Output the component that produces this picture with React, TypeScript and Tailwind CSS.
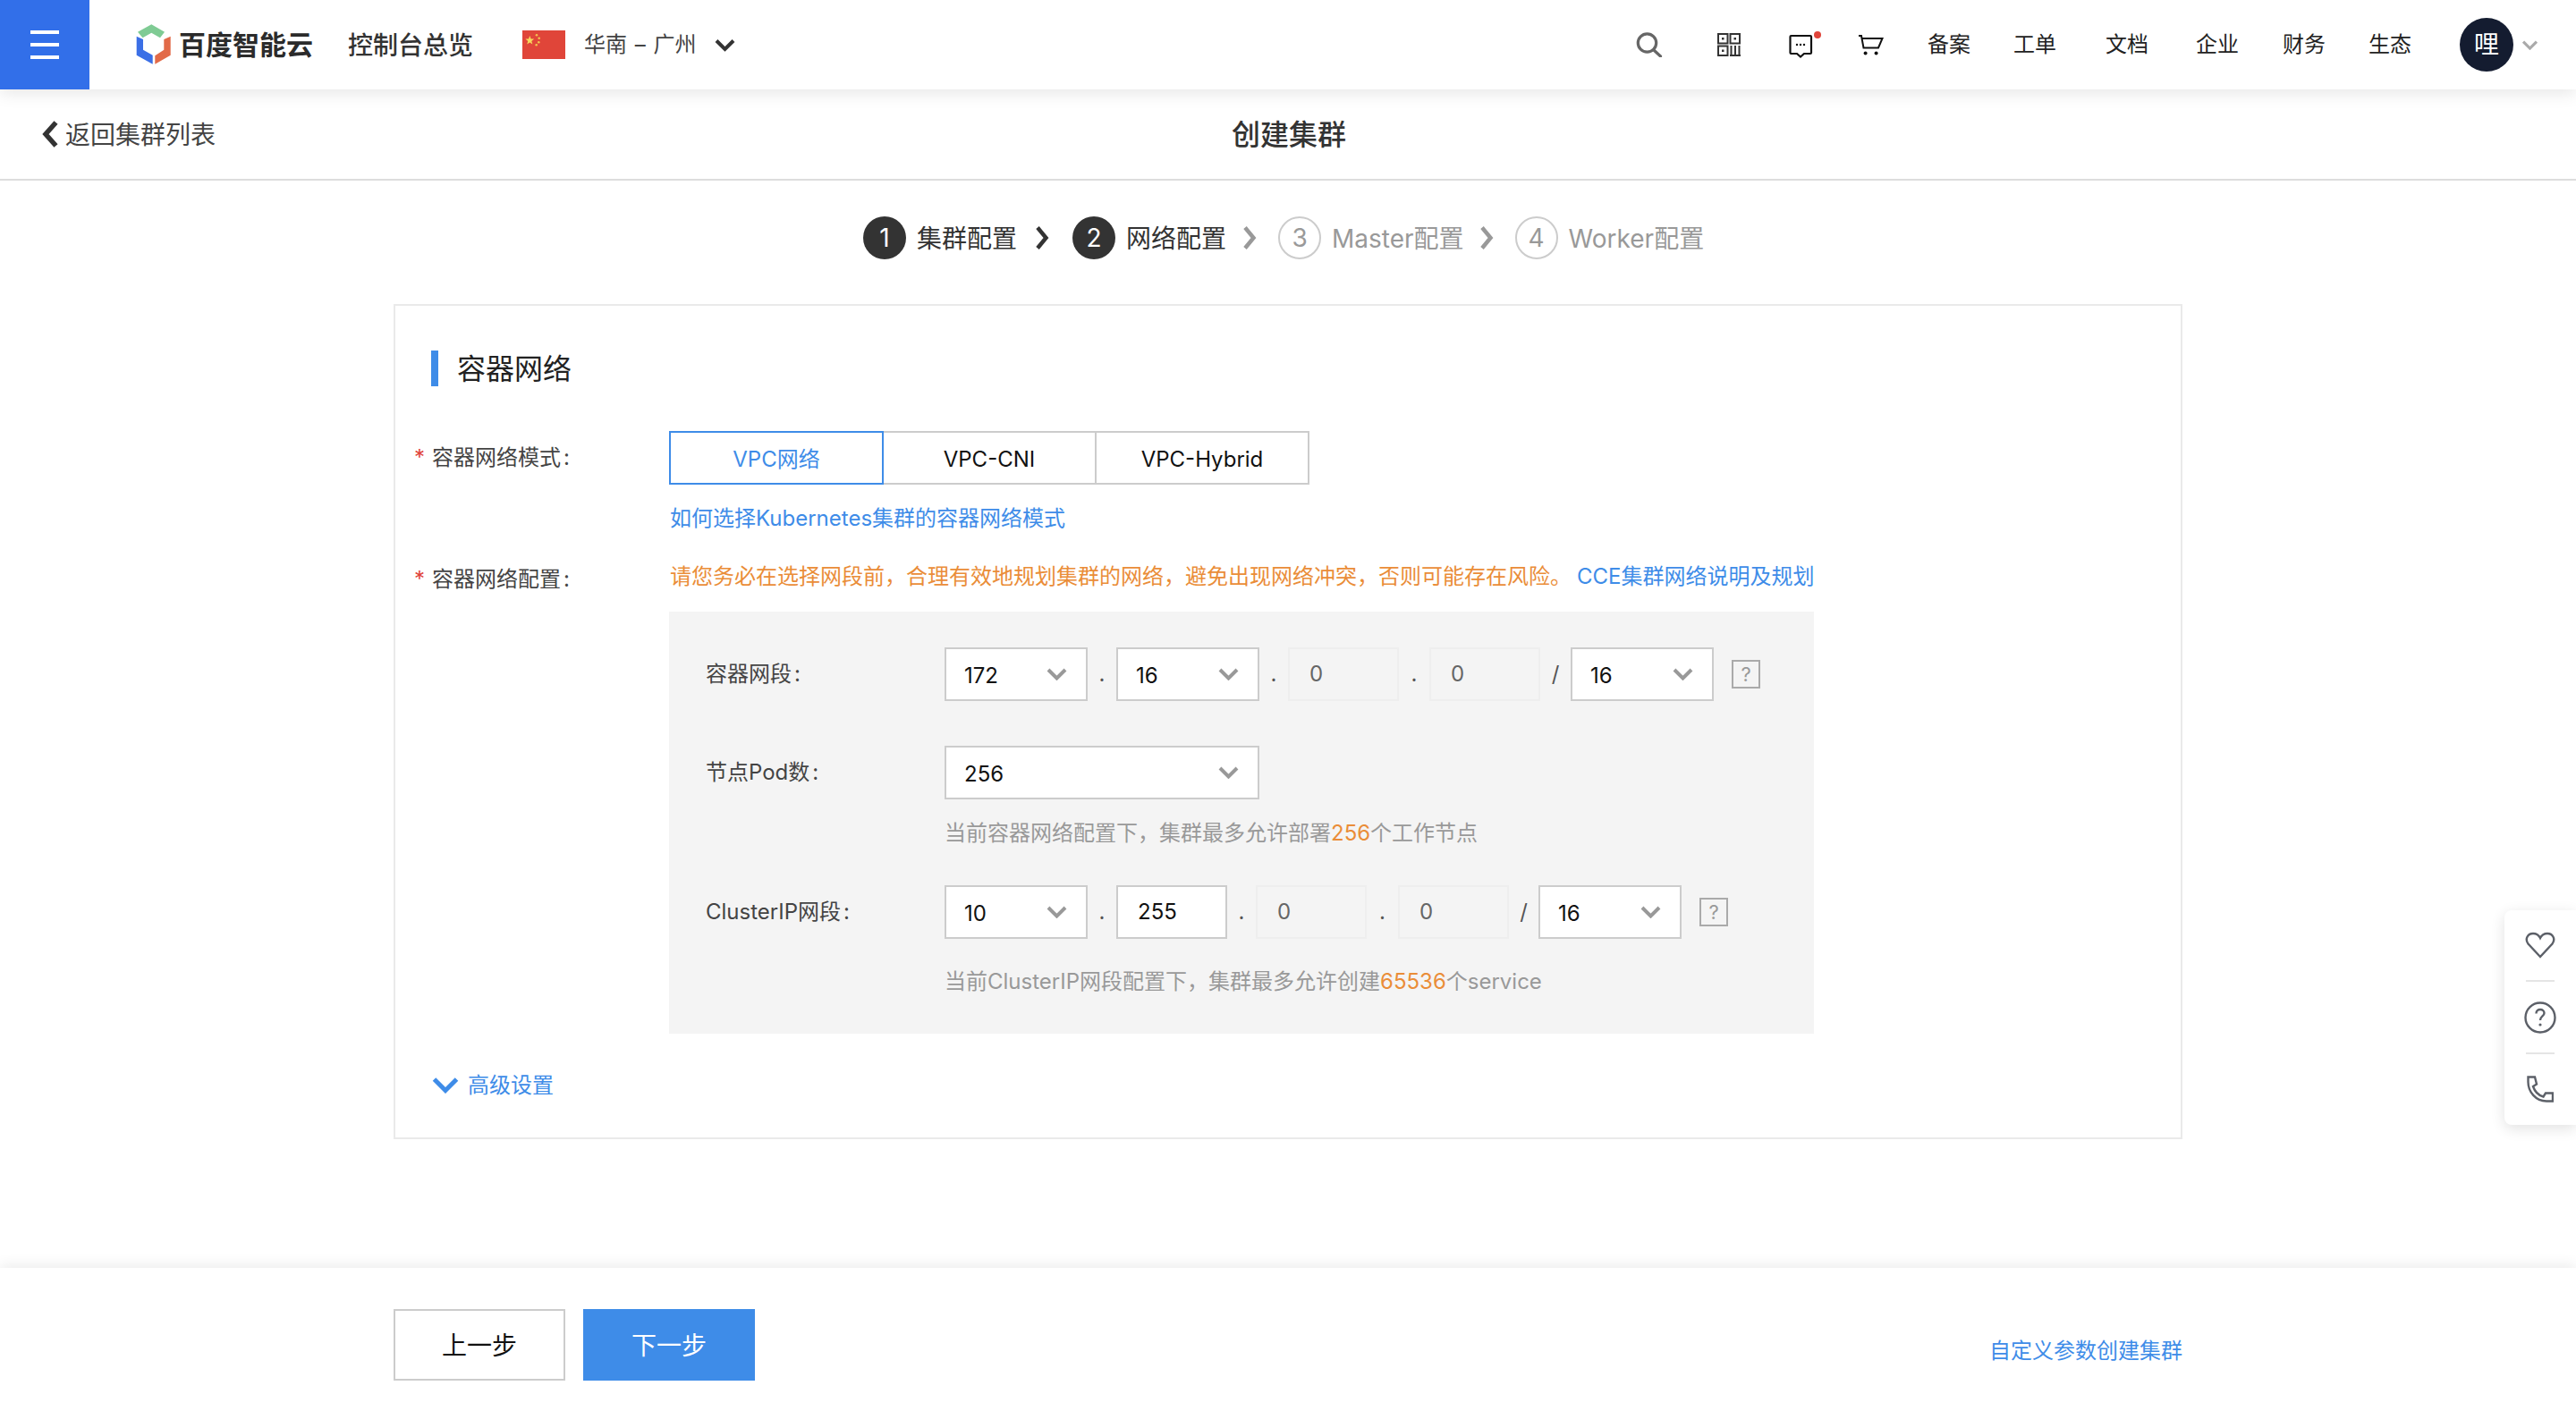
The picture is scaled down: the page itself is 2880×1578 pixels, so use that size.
import type { ReactNode } from "react";

function Chevron({ className = "", color = "#999999" }: { className?: string; color?: string }) {
  return (
    <svg viewBox="0 0 23 14" className={className} fill="none">
      <path d="M2 2 L11.5 11.5 L21 2" stroke={color} strokeWidth="4" />
    </svg>
  );
}

function StepArrow({ color }: { color: string }) {
  return (
    <svg viewBox="0 0 16 26" className="h-[26px] w-[16px]" fill="none">
      <path d="M3 1.5 L12.5 13 L3 24.5" stroke={color} strokeWidth="4.5" />
    </svg>
  );
}

function Step({ num, label, active }: { num: string; label: string; active: boolean }) {
  return (
    <div className="flex items-center">
      <span
        className={
          active
            ? "flex h-[48px] w-[48px] items-center justify-center rounded-full bg-[#333333] text-[28px] text-white"
            : "flex h-[48px] w-[48px] items-center justify-center rounded-full border-2 border-[#cccccc] text-[28px] text-[#999999]"
        }
      >
        {num}
      </span>
      <span className={active ? "ml-[12px] pt-[2px] text-[28px] text-[#333333]" : "ml-[12px] pt-[2px] text-[28px] text-[#999999]"}>
        {label}
      </span>
    </div>
  );
}

function Select({ value, className }: { value: string; className: string }) {
  return (
    <div className={`flex h-[60px] items-center justify-between border-2 border-[#cccccc] bg-white pl-[20px] pr-[21px] ${className}`}>
      <span className="pt-[3px] text-[24px] text-[#111111]">{value}</span>
      <Chevron className="h-[14px] w-[23px]" />
    </div>
  );
}

function Octet({ value, disabled }: { value: string; disabled?: boolean }) {
  return (
    <div
      className={
        disabled
          ? "flex h-[60px] w-[124px] items-center border-2 border-[#eeeeee] bg-[#f4f4f4] pl-[22px] text-[24px] text-[#666666]"
          : "flex h-[60px] w-[124px] items-center border-2 border-[#cccccc] bg-white pl-[22px] text-[24px] text-[#111111]"
      }
    >
      {value}
    </div>
  );
}

function Sep({ char, className }: { char: string; className: string }) {
  return <span className={`text-center text-[24px] text-[#555555] ${className}`}>{char}</span>;
}

function HelpBox() {
  return (
    <span className="ml-[20px] flex h-[32px] w-[32px] items-center justify-center border-2 border-[#aaaaaa] text-[22px] text-[#999999]">
      ?
    </span>
  );
}

function FieldLabel({ children }: { children: ReactNode }) {
  return (
    <div className="w-[267px] shrink-0 text-[24px] text-[#444444]">
      {children}
      <span className="ml-[3px]">:</span>
    </div>
  );
}

function RequiredLabel({ text, className }: { text: string; className: string }) {
  return (
    <div className={`flex w-[306px] shrink-0 items-center pl-[21px] text-[24px] text-[#444444] ${className}`}>
      <span className="w-[20px] text-[#e0443a]">*</span>
      <span>
        {text}
        <span className="ml-[3px]">:</span>
      </span>
    </div>
  );
}

function TopBar() {
  return (
    <header className="relative z-10 flex h-[100px] shrink-0 items-center bg-white shadow-[0_4px_18px_rgba(0,0,0,0.1)]">
      <div className="flex h-[100px] w-[100px] flex-col items-center justify-center gap-[10px] bg-[#326fe9]">
        <span className="h-[4px] w-[32px] bg-white" />
        <span className="h-[4px] w-[32px] bg-white" />
        <span className="h-[4px] w-[32px] bg-white" />
      </div>

      <svg viewBox="12 8 40 46" className="ml-[52px] h-[46px] w-[40px]">
        <path d="M29.3 8.3 L44 16.7 L39 23.3 L29.3 17.7 L19.5 23.3 L14 16.7 Z" fill="#7fcb94" />
        <path d="M12.7 21.7 L20 25 V36.7 L30.7 42.7 V52.7 L12.7 42.7 Z" fill="#3b6fe6" />
        <path d="M50.7 21.7 L43.3 25 V36.7 L33.3 43.3 V52.7 L50.7 42.7 Z" fill="#e26a48" />
      </svg>
      <span className="ml-[8px] text-[30px] font-bold text-[#2b2b2b]">百度智能云</span>
      <span className="ml-[39px] pt-[2px] text-[28px] font-medium text-[#333333]">控制台总览</span>

      <svg viewBox="0 0 48 32" className="ml-[55px] h-[32px] w-[48px]">
        <rect width="48" height="32" fill="#e04539" />
        <path d="M8.3 6 L9.6 9.6 L13.2 9.6 L10.3 11.9 L11.4 15.6 L8.3 13.4 L5.2 15.6 L6.3 11.9 L3.4 9.6 L7 9.6 Z" fill="#f7d95c" />
        <circle cx="16" cy="5.3" r="1.3" fill="#f3c24f" />
        <circle cx="18.7" cy="8.7" r="1.3" fill="#f3c24f" />
        <circle cx="18.3" cy="13.3" r="1.3" fill="#f3c24f" />
        <circle cx="15.7" cy="16.3" r="1.3" fill="#f3c24f" />
      </svg>
      <span className="ml-[21px] w-[125px] whitespace-nowrap text-[24px] text-[#444444] [word-spacing:2px]">华南 – 广州</span>
      <Chevron className="ml-[21px] h-[15px] w-[23px]" color="#333333" />

      <div className="ml-auto flex items-center pr-[43px]">
        <svg viewBox="0 0 30 28" className="h-[28px] w-[30px]" fill="none" stroke="#666666" strokeWidth="3.2">
          <circle cx="12.5" cy="12" r="10.2" />
          <path d="M20 20 L27.5 27" strokeLinecap="round" />
        </svg>

        <svg viewBox="0 0 26 26" className="ml-[61px] h-[26px] w-[26px]" fill="none" stroke="#333333" strokeWidth="2">
          <rect x="1" y="1" width="10.5" height="10.5" />
          <rect x="14.5" y="1" width="10.5" height="10.5" />
          <rect x="1" y="14.5" width="10.5" height="10.5" />
          <rect x="5" y="5" width="2.5" height="2.5" fill="#333333" stroke="none" />
          <rect x="18.5" y="5" width="2.5" height="2.5" fill="#333333" stroke="none" />
          <rect x="5" y="18.5" width="2.5" height="2.5" fill="#333333" stroke="none" />
          <path d="M14 25 H26 M15.5 14 V24 M20 14 V24 M24.5 14 V24" />
        </svg>

        <svg viewBox="0 0 37 30" className="ml-[53px] h-[30px] w-[37px]" fill="none">
          <path d="M3.5 5 H25 Q26 5 26 6 V24 Q26 25 25 25 H18 L14 28.5 L10 25 H3.5 Q2.5 25 2.5 24 V6 Q2.5 5 3.5 5 Z" stroke="#111111" strokeWidth="2.2" />
          <circle cx="10" cy="15" r="1.2" fill="#111111" />
          <circle cx="14" cy="15" r="1.2" fill="#111111" />
          <circle cx="18" cy="15" r="1.2" fill="#111111" />
          <circle cx="33" cy="4" r="4" fill="#e0443a" />
        </svg>

        <svg viewBox="0 0 29 23" className="ml-[41px] h-[23px] w-[29px]" fill="none">
          <path d="M1 1 H4 L6.5 14.5 H23 L27.5 4 H5" stroke="#111111" strokeWidth="2" />
          <circle cx="8.6" cy="20.5" r="2" fill="#111111" />
          <circle cx="20.6" cy="20.5" r="2" fill="#111111" />
        </svg>

        <span className="ml-[49px] text-[24px] text-[#222222]">备案</span>
        <span className="ml-[48px] text-[24px] text-[#222222]">工单</span>
        <span className="ml-[55px] text-[24px] text-[#222222]">文档</span>
        <span className="ml-[53px] text-[24px] text-[#222222]">企业</span>
        <span className="ml-[49px] text-[24px] text-[#222222]">财务</span>
        <span className="ml-[48px] text-[24px] text-[#222222]">生态</span>

        <span className="ml-[54px] flex h-[60px] w-[60px] items-center justify-center rounded-full bg-[#141c30] text-[28px] text-white">
          哩
        </span>
        <Chevron className="ml-[9px] -mr-[1px] h-[11px] w-[19px]" color="#aaaaaa" />
      </div>
    </header>
  );
}

function BackBar() {
  return (
    <div className="grid h-[102px] shrink-0 grid-cols-3 items-center border-b-2 border-[#dddddd] pl-[46px]">
      <div className="flex items-center">
        <svg viewBox="0 0 20 30" className="h-[30px] w-[20px]" fill="none">
          <path d="M16.5 2 L5 15 L16.5 28" stroke="#333333" strokeWidth="5.5" />
        </svg>
        <span className="ml-[7px] pt-[2px] text-[28px] text-[#444444]">返回集群列表</span>
      </div>
      <h1 className="-ml-[44px] pt-[2px] text-center text-[32px] font-medium text-[#333333]">创建集群</h1>
    </div>
  );
}

function StepBar() {
  return (
    <div className="mt-[40px] flex h-[48px] shrink-0 items-center pl-[965px]">
      <Step num="1" label="集群配置" active />
      <div className="ml-[20px]">
        <StepArrow color="#333333" />
      </div>
      <div className="ml-[26px]">
        <Step num="2" label="网络配置" active />
      </div>
      <div className="ml-[18px]">
        <StepArrow color="#999999" />
      </div>
      <div className="ml-[24px]">
        <Step num="3" label="Master配置" active={false} />
      </div>
      <div className="ml-[17px]">
        <StepArrow color="#999999" />
      </div>
      <div className="ml-[24px]">
        <Step num="4" label="Worker配置" active={false} />
      </div>
    </div>
  );
}

function NetworkCard() {
  return (
    <section className="mx-auto mt-[50px] h-[934px] w-[2000px] shrink-0 border-2 border-[#eaeaea] pt-[50px]">
      <div className="ml-[40px] flex h-[40px] items-center border-l-[8px] border-[#3e8ce8] pl-[21px] text-[32px] text-[#222222]">
        <span className="pt-[2px]">容器网络</span>
      </div>

      <div className="mt-[50px] flex">
        <RequiredLabel text="容器网络模式" className="h-[60px]" />
        <div>
          <div className="flex">
            <div className="relative z-[1] flex h-[60px] w-[240px] items-center justify-center border-2 border-[#3e8ce8] pt-[4px] text-[24px] text-[#3e8ce8]">
              VPC网络
            </div>
            <div className="-ml-[2px] flex h-[60px] w-[240px] items-center justify-center border-2 border-[#cccccc] pt-[4px] text-[24px] text-[#111111]">
              VPC-CNI
            </div>
            <div className="-ml-[2px] flex h-[60px] w-[240px] items-center justify-center border-2 border-[#cccccc] pt-[4px] text-[24px] text-[#111111]">
              VPC-Hybrid
            </div>
          </div>
          <div className="ml-[1px] mt-[20px] text-[24px] leading-[36px] text-[#3e8ce8]">如何选择Kubernetes集群的容器网络模式</div>
        </div>
      </div>

      <div className="mt-[29px] flex">
        <RequiredLabel text="容器网络配置" className="h-[36px] pt-[6px]" />
        <div className="w-[1280px]">
          <div className="ml-[1px] whitespace-nowrap text-[24px] leading-[36px] text-[#ea8d38]">
            请您务必在选择网段前，合理有效地规划集群的网络，避免出现网络冲突，否则可能存在风险。
            <span className="ml-[6px] text-[#3e8ce8]">CCE集群网络说明及规划</span>
          </div>

          <div className="mt-[21px] h-[472px] bg-[#f4f4f4] pl-[41px] pt-[40px]">
            <div className="flex h-[60px] items-center">
              <FieldLabel>容器网段</FieldLabel>
              <Select value="172" className="w-[160px]" />
              <Sep char="." className="w-[32px]" />
              <Select value="16" className="w-[160px]" />
              <Sep char="." className="w-[32px]" />
              <Octet value="0" disabled />
              <Sep char="." className="w-[34px]" />
              <Octet value="0" disabled />
              <Sep char="/" className="w-[34px]" />
              <Select value="16" className="w-[160px]" />
              <HelpBox />
            </div>

            <div className="mt-[50px] flex h-[60px] items-center">
              <FieldLabel>节点Pod数</FieldLabel>
              <Select value="256" className="w-[352px]" />
            </div>
            <div className="ml-[267px] mt-[20px] text-[24px] leading-[36px] text-[#999999]">
              当前容器网络配置下，集群最多允许部署<span className="text-[#ea8d38]">256</span>个工作节点
            </div>

            <div className="mt-[40px] flex h-[60px] items-center">
              <FieldLabel>ClusterIP网段</FieldLabel>
              <Select value="10" className="w-[160px]" />
              <Sep char="." className="w-[32px]" />
              <Octet value="255" />
              <Sep char="." className="w-[32px]" />
              <Octet value="0" disabled />
              <Sep char="." className="w-[35px]" />
              <Octet value="0" disabled />
              <Sep char="/" className="w-[33px]" />
              <Select value="16" className="w-[160px]" />
              <HelpBox />
            </div>
            <div className="ml-[267px] mt-[30px] text-[24px] leading-[36px] text-[#999999]">
              当前ClusterIP网段配置下，集群最多允许创建<span className="text-[#ea8d38]">65536</span>个service
            </div>
          </div>
        </div>
      </div>

      <div className="ml-[41px] mt-[39px] flex h-[36px] items-center">
        <svg viewBox="0 0 30 19" className="h-[19px] w-[30px]" fill="none">
          <path d="M2.5 3 L15 15.5 L27.5 3" stroke="#3e8ce8" strokeWidth="5" />
        </svg>
        <span className="ml-[10px] pt-[2px] text-[24px] text-[#3e8ce8]">高级设置</span>
      </div>
    </section>
  );
}

function FooterBar() {
  return (
    <footer className="relative mt-auto flex h-[160px] shrink-0 items-start justify-between bg-white px-[440px] pt-[46px] shadow-[0_-4px_14px_rgba(0,0,0,0.07)]">
      <div className="flex gap-[20px]">
        <button className="h-[80px] w-[192px] border-2 border-[#cccccc] bg-white pt-[2px] text-[28px] text-[#111111]">上一步</button>
        <button className="h-[80px] w-[192px] bg-[#3e8ce8] pt-[2px] text-[28px] text-white">下一步</button>
      </div>
      <span className="mt-[29px] text-[24px] leading-[36px] text-[#3e8ce8]">自定义参数创建集群</span>
    </footer>
  );
}

function SideTools() {
  return (
    <aside className="absolute right-0 top-[1018px] z-20 flex h-[240px] w-[80px] flex-col items-center rounded-l-[8px] bg-white pt-[24px] shadow-[0_4px_16px_rgba(0,0,0,0.12)]">
      <svg viewBox="0 0 34 30" className="h-[30px] w-[34px]" fill="none" stroke="#5c6068" strokeWidth="2.4">
        <path d="M17 28 L3.5 13.5 C-0.5 8 3 2 9 2 C12.5 2 15.5 4 17 7 C18.5 4 21.5 2 25 2 C31 2 34.5 8 30.5 13.5 Z" />
      </svg>
      <span className="mt-[24px] h-[2px] w-[32px] bg-[#e5e5e5]" />
      <svg viewBox="0 0 36 36" className="mt-[22px] h-[36px] w-[36px]" fill="none" stroke="#5c6068" strokeWidth="2.4">
        <circle cx="18" cy="18" r="16.5" />
        <path d="M13.5 13.5 C13.5 10.5 15.5 9 18 9 C20.5 9 22.5 10.5 22.5 13 C22.5 16.5 18 16.5 18 21" />
        <circle cx="18" cy="26" r="1.6" fill="#5c6068" stroke="none" />
      </svg>
      <span className="mt-[21px] h-[2px] w-[32px] bg-[#e5e5e5]" />
      <svg viewBox="0 0 30 30" className="mt-[24px] h-[30px] w-[30px]" fill="none" stroke="#5c6068" strokeWidth="2.4">
        <path d="M1.5 1.5 H9 L11 9.5 L7 12 C9 18 13 22 18.5 23.5 L21 19.5 H29 V28.5 H22 C10 28.5 1.5 18 1.5 7 Z" />
      </svg>
    </aside>
  );
}

export default function App() {
  return (
    <div className="relative flex h-[1578px] w-full flex-col overflow-hidden bg-white font-['Inter','Noto_Sans_CJK_SC',sans-serif]">
      <TopBar />
      <BackBar />
      <StepBar />
      <NetworkCard />
      <FooterBar />
      <SideTools />
    </div>
  );
}
